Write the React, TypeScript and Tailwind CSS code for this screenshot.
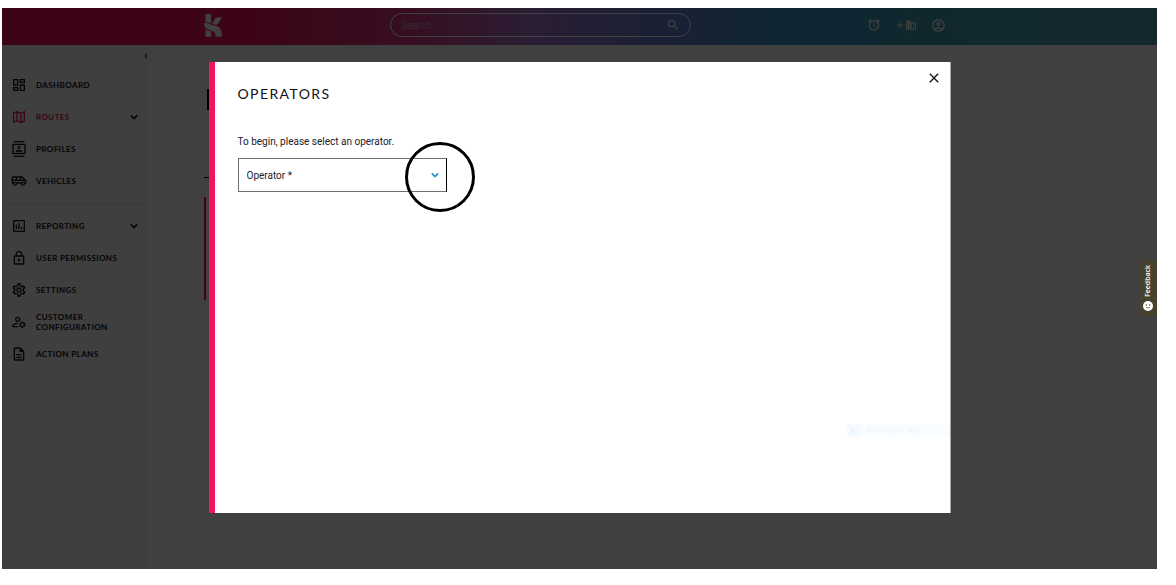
import { useState } from 'react';
import type { IconType } from 'react-icons';
import {
  MdAdd,
  MdAlarm,
  MdChevronLeft,
  MdClose,
  MdDomain,
  MdOutlineAccountCircle,
  MdOutlineAirportShuttle,
  MdOutlineAssessment,
  MdOutlineContacts,
  MdOutlineDashboard,
  MdOutlineDescription,
  MdOutlineLock,
  MdOutlineManageAccounts,
  MdOutlineMap,
  MdOutlineSettings,
  MdSearch,
} from 'react-icons/md';

interface NavItem {
  label: string;
  icon: IconType;
  expandable?: boolean;
  active?: boolean;
}

const mainItems: NavItem[] = [
  { label: 'DASHBOARD', icon: MdOutlineDashboard },
  { label: 'ROUTES', icon: MdOutlineMap, expandable: true, active: true },
  { label: 'PROFILES', icon: MdOutlineContacts },
  { label: 'VEHICLES', icon: MdOutlineAirportShuttle },
];

const adminItems: NavItem[] = [
  { label: 'REPORTING', icon: MdOutlineAssessment, expandable: true },
  { label: 'USER PERMISSIONS', icon: MdOutlineLock },
  { label: 'SETTINGS', icon: MdOutlineSettings },
  { label: 'CUSTOMER CONFIGURATION', icon: MdOutlineManageAccounts },
  { label: 'ACTION PLANS', icon: MdOutlineDescription },
];

function Chevron({ className }: { className: string }) {
  return (
    <svg viewBox="0 0 8 8" className={className} fill="none" stroke="currentColor" strokeWidth="1.5">
      <path d="M0.8 2.4 4 5.6 7.2 2.4" />
    </svg>
  );
}

function NavList({ items }: { items: NavItem[] }) {
  return (
    <ul>
      {items.map(({ label, icon: Icon, expandable, active }) => (
        <li key={label}>
          <a
            href="#"
            className={
              active
                ? 'flex h-8 items-center pr-2 pl-[9px] text-[#f01050]'
                : 'flex h-8 items-center pr-2 pl-[9px] text-[#101018]'
            }
          >
            <Icon className="size-4 shrink-0" />
            <span className="ml-[9px] flex-1 font-[Lato,sans-serif] text-[8px] leading-[10px] font-bold tracking-wider">
              {label}
            </span>
            {expandable && <Chevron className="size-2 shrink-0 text-[#101018]" />}
          </a>
        </li>
      ))}
    </ul>
  );
}

function Logo() {
  return (
    <svg viewBox="0 0 18 23" className="h-[23px] w-[18px] shrink-0" fill="#ffffff">
      <path d="M1.5 0H7.2v9L1.5 8.2z" />
      <path d="M8 9.4 12 3.4H18L13.4 10.6 10.5 10.8z" />
      <path d="M0 9.4C2 8.8 4.2 9.2 6.5 10.4L12.5 12C16 13 18 16 18 22.8H11.6C11.6 19 10 17.4 7.5 16.8L4.2 15.6C1.6 14.6.2 12.6 0 9.4z" />
      <path d="M1.5 15.4 7.2 17.6V22.8H1.5z" />
    </svg>
  );
}

function Header() {
  return (
    <header className="flex h-[37px] shrink-0 items-center bg-[linear-gradient(90deg,#f01050_0%,#f01050_20%,#d83c88_36%,#a878d0_46%,#7080d0_56%,#3c94c8_67%,#3498c4_73%,#40a0b4_79%,#4ca0b0_100%)] pr-[211px] pb-[3px] pl-[202px]">
      <Logo />
      <div className="ml-[168px] flex h-6 w-[301px] items-center rounded-full border border-white pr-2.5 pl-2.5">
        <input
          type="search"
          aria-label="Search"
          placeholder="Search"
          className="min-w-0 flex-1 bg-transparent font-[Roboto,sans-serif] text-[10px] text-white outline-none placeholder:text-[#d0a0c8]"
        />
        <MdSearch className="size-3.5 text-white" />
      </div>
      <div className="ml-auto flex items-center gap-3.5 text-white">
        <button type="button" aria-label="Reminders">
          <MdAlarm className="size-3.5" />
        </button>
        <button type="button" aria-label="Add company" className="flex items-center">
          <MdAdd className="size-2.5" />
          <MdDomain className="size-3" />
        </button>
        <button type="button" aria-label="Account">
          <MdOutlineAccountCircle className="size-[15px]" />
        </button>
      </div>
    </header>
  );
}

function OperatorDialog({ onClose }: { onClose: () => void }) {
  const [operator, setOperator] = useState('');

  return (
    <div
      role="dialog"
      aria-labelledby="dialog-title"
      className="relative h-[451px] w-[742px] max-w-full border-r border-l-6 border-r-[#a8a8a8] border-l-[#f4145c] bg-white px-[23px] pt-6"
    >
      <button
        type="button"
        aria-label="Close"
        onClick={onClose}
        className="absolute top-2 right-2 text-[#101018]"
      >
        <MdClose className="size-4" />
      </button>
      <h2
        id="dialog-title"
        className="font-[Lato,sans-serif] text-[14px] leading-4 tracking-widest text-[#101018]"
      >
        OPERATORS
      </h2>
      <label
        htmlFor="operator"
        className="mt-8 block font-[Roboto,sans-serif] text-[10px] leading-4 text-[#202028]"
      >
        To begin, please select an operator.
      </label>
      <div className="relative mt-2 w-[209px]">
        <select
          id="operator"
          value={operator}
          onChange={(e) => setOperator(e.target.value)}
          className="block h-[34px] w-full appearance-none border border-[#707074] border-r-black bg-white pl-2 font-[Roboto,sans-serif] text-[10px] text-[#202028]"
        >
          <option value="">Operator *</option>
        </select>
        <Chevron className="pointer-events-none absolute top-[13px] right-2 size-2 text-[#2090b8]" />
        {/* marker around the drop-down arrow */}
        <div className="pointer-events-none absolute -top-4 -right-7 size-[70px] rounded-full border-3 border-black" />
      </div>
      {/* fading snip hint */}
      <div className="absolute right-0 bottom-[76px] flex h-[13px] w-[103px] items-center bg-[#fafdff]">
        <span className="flex size-[13px] items-center justify-center bg-[#f4faff]">
          <span className="size-1 rounded-full bg-[#e8f2fa]" />
        </span>
        <span className="ml-1.5 font-[Open_Sans,sans-serif] text-[7px] text-[#eff2f5]">
          Rectangular Snip
        </span>
      </div>
    </div>
  );
}

export default function App() {
  const [open, setOpen] = useState(true);

  return (
    <div className="h-screen bg-white pt-2 pr-[19px] pb-4 pl-[2px]">
      <div className="relative flex h-full flex-col overflow-hidden bg-white">
        <Header />
        <div className="flex flex-1">
          <aside className="relative w-[145px] shrink-0 border-r border-[#eeeeee] bg-[#f9f9f9] pt-6">
            <button
              type="button"
              aria-label="Collapse menu"
              className="absolute top-1 -right-[7px] flex size-3.5 items-center justify-center rounded-full border border-[#eeeeee] bg-white text-[#101018]"
            >
              <MdChevronLeft className="size-2.5" />
            </button>
            <nav>
              <NavList items={mainItems} />
              <hr className="my-1.5 border-[#e4e4e4]" />
              <NavList items={adminItems} />
            </nav>
          </aside>
          <main className="flex-1 pt-11 pl-[57px]">
            <div className="ml-[3px] h-[21px] w-2 bg-black" />
            <div className="mt-[67px] w-8 border-t border-black" />
            <div className="mt-[19px] h-[103px] w-8 border-l-2 border-[#f01050]" />
          </main>
        </div>
        {open && (
          <div className="absolute inset-0 flex items-center justify-center bg-black/75 pb-0.5">
            <OperatorDialog onClose={() => setOpen(false)} />
          </div>
        )}
        <button
          type="button"
          className="absolute top-[251px] right-0 flex h-[57px] w-[18px] rotate-180 items-center justify-center gap-1 bg-[#46422f] font-[Open_Sans,sans-serif] text-[7px] font-semibold text-white [writing-mode:vertical-rl]"
        >
          <svg viewBox="0 0 10 10" className="size-2.5 rotate-180">
            <circle cx="5" cy="5" r="5" fill="#ffffff" />
            <circle cx="3.3" cy="4" r="0.7" fill="#46422f" />
            <circle cx="6.7" cy="4" r="0.7" fill="#46422f" />
            <path d="M3 6.2Q5 8.2 7 6.2" stroke="#46422f" strokeWidth="0.7" fill="none" />
          </svg>
          Feedback
        </button>
      </div>
    </div>
  );
}
